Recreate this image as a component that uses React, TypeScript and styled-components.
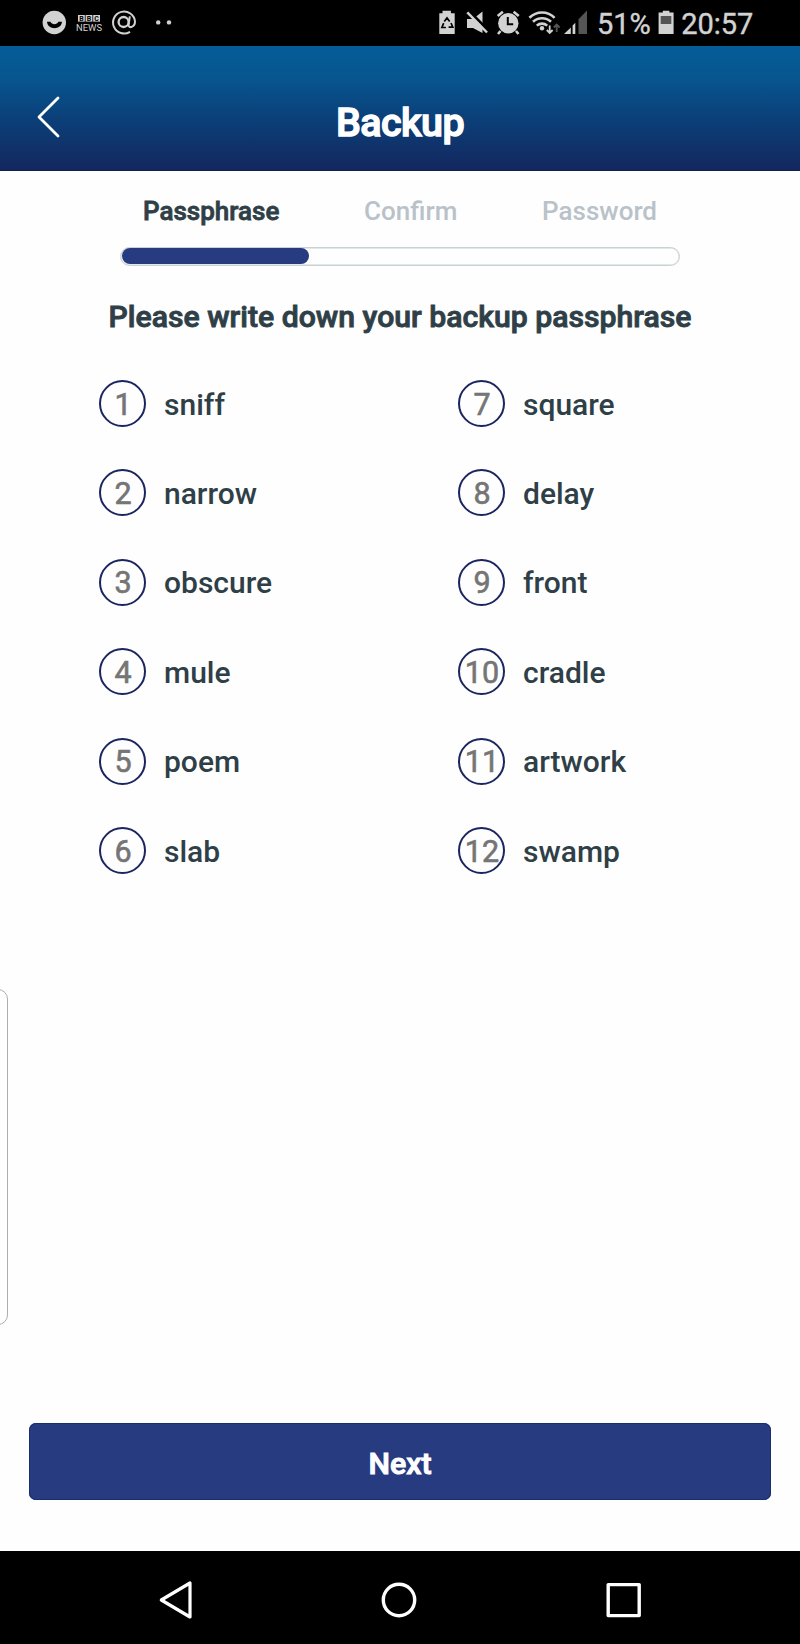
import React from 'react';
import styled, { createGlobalStyle } from 'styled-components';

const GlobalStyle = createGlobalStyle`
  * { box-sizing: border-box; }
  body { margin: 0; background: #fff; font-family: Roboto, "Liberation Sans", sans-serif; }
`;

const Screen = styled.div`
  width: 800px;
  height: 1644px;
  display: flex;
  flex-direction: column;
  position: relative;
  overflow: hidden;
  background: #fefefe;
`;

const StatusBar = styled.div`
  height: 46px;
  flex: none;
  background: #000;
  color: #d2d2d2;
  display: flex;
  justify-content: space-between;
  padding: 0 42px 0 40px;
`;

const StatusGroup = styled.div`
  display: flex;
  align-items: flex-start;
`;

const StatusText = styled.span<{ $width: number }>`
  width: ${(p) => p.$width}px;
  font-size: 29px;
  line-height: 48px;
  white-space: nowrap;
  -webkit-text-stroke: 0.4px currentColor;
`;

const Header = styled.header`
  height: 125px;
  flex: none;
  display: grid;
  grid-template-columns: 100px 1fr 100px;
  align-items: center;
  padding-top: 30px;
  background: linear-gradient(#045d97 0%, #075690 25%, #0b4079 58%, #14275f 100%);
  border-bottom: 1px solid #10204c;
`;

const BackButton = styled.button`
  width: 30px;
  height: 46px;
  margin: -13px 0 0 34px;
  padding: 0;
  border: 0;
  background: none;
`;

const Title = styled.h1`
  margin: 0;
  text-align: center;
  color: #fff;
  font-size: 39.5px;
  line-height: 48px;
  font-weight: 500;
  letter-spacing: -0.6px;
  -webkit-text-stroke: 1.3px currentColor;
`;

const Main = styled.main`
  flex: 1;
  display: flex;
  flex-direction: column;
  padding: 25px 29px 51px;
`;

const Steps = styled.div`
  width: 560px;
  margin: 0 auto;
`;

const StepLabels = styled.div`
  display: flex;
  justify-content: space-between;
  padding: 0 23px;
`;

const StepLabel = styled.span<{ $active?: boolean }>`
  font-size: 26px;
  line-height: 30px;
  font-weight: 500;
  color: ${(p) => (p.$active ? '#2f3f47' : '#b9c2c9')};
  -webkit-text-stroke: ${(p) => (p.$active ? 0.8 : 0)}px currentColor;
`;

const Track = styled.div`
  margin-top: 21px;
  height: 19px;
  border: 1.5px solid #cbd2d5;
  border-radius: 10px;
  padding: 0 1px;
  box-shadow: inset 0 0 0 0.5px #cbd2d5;
`;

const Fill = styled.div`
  width: 187px;
  height: 16px;
  border-radius: 8px;
  background: #273b80;
`;

const Heading = styled.h2`
  margin: 33px 0 0;
  text-align: center;
  font-size: 30.2px;
  line-height: 36px;
  font-weight: 500;
  color: #2f3f47;
  -webkit-text-stroke: 0.9px currentColor;
  white-space: nowrap;
`;

const WordGrid = styled.ol`
  list-style: none;
  margin: 45px 0 0;
  padding: 0 0 0 70px;
  display: grid;
  grid-template-columns: 359px 1fr;
  grid-template-rows: repeat(6, 47px);
  grid-auto-flow: column;
  row-gap: 42.45px;
`;

const WordItem = styled.li`
  display: flex;
  align-items: center;
  gap: 18px;
`;

const Badge = styled.span`
  width: 47px;
  height: 47px;
  border: 2px solid #1b2560;
  border-radius: 50%;
  display: flex;
  align-items: center;
  justify-content: center;
  padding: 2px 0 0 1px;
  font-size: 30.5px;
  line-height: 36px;
  font-weight: 400;
  -webkit-text-stroke: 0.6px currentColor;
  color: #757575;
`;

const Word = styled.span`
  padding-top: 2px;
  font-size: 30px;
  line-height: 36px;
  font-weight: 500;
  color: #2f3f47;
`;

const NextButton = styled.button`
  margin-top: auto;
  height: 77px;
  border: 0;
  border-radius: 7px;
  background: #273b80;
  box-shadow: inset 0 0 0 1px #1c2d6c;
  color: #fff;
  font-family: inherit;
  font-size: 30.3px;
  font-weight: 500;
  -webkit-text-stroke: 1px currentColor;
  padding: 3px 0 0;
`;

const EdgeHandle = styled.div`
  position: absolute;
  left: -20px;
  top: 989px;
  width: 28px;
  height: 336px;
  border: 1.5px solid #adadad;
  border-radius: 10px;
`;

const NavBar = styled.nav`
  height: 93px;
  flex: none;
  background: #000;
  display: flex;
  justify-content: space-between;
  align-items: center;
  padding: 5px 157px 0;
`;

const LeftStatusIcons = () => (
  <svg width="150" height="46" viewBox="40 0 150 46" fill="none">
    <circle cx="54.3" cy="22.5" r="11.7" fill="#d2d2d2" />
    <path d="M47 21.8h3.4c1.3 3.2 6.8 3.2 8 0h3.6c-.6 8.6-14.4 8.6-15 0Z" fill="#000" />
    <g fill="#d2d2d2">
      <rect x="78" y="15" width="6.8" height="6.6" />
      <rect x="85.6" y="15" width="6.8" height="6.6" />
      <rect x="93.2" y="15" width="6.8" height="6.6" />
    </g>
    <g fontFamily="Roboto, sans-serif">
      <g fill="#000" fontSize="7" fontWeight="700" textAnchor="middle">
        <text x="81.4" y="20.9">B</text>
        <text x="89" y="20.9">B</text>
        <text x="96.6" y="20.9">C</text>
      </g>
      <text x="76" y="31" fill="#d2d2d2" fontSize="9.7" textLength="26" lengthAdjust="spacingAndGlyphs">NEWS</text>
    </g>
    <circle cx="123.6" cy="22" r="5" stroke="#d2d2d2" strokeWidth="2.3" />
    <path d="M129.8 16.3l-1.2 8.6c-.2 4 6.4 2.4 6.4-3.4A11 11 0 1 0 130 31.8" stroke="#d2d2d2" strokeWidth="2" />
    <circle cx="158.2" cy="22.4" r="2.2" fill="#d2d2d2" />
    <circle cx="169" cy="22.4" r="2.2" fill="#d2d2d2" />
  </svg>
);

const RightStatusIcons = () => (
  <svg width="162" height="46" viewBox="435 0 162 46" fill="none">
    {/* battery saver */}
    <path d="M439.3 13.2h3.2v-2.4h8.4v2.4h3.8V34h-15.4Z" fill="#d2d2d2" />
    <path d="M444.3 21.5l2.7-3.6 2.7 3.6M451 23l1.8 4.2h-4.2M445.9 27.5h-4l1.8-4.4" stroke="#000" strokeWidth="1.7" />
    {/* muted */}
    <path d="M467 19h6l9.5-7.5v21.5L473 28h-6Z" fill="#d2d2d2" />
    <path d="M469.2 11.4l20.4 20.4" stroke="#000" strokeWidth="3" />
    <path d="M467.3 12.3L487 32.5" stroke="#d2d2d2" strokeWidth="2.5" />
    {/* alarm */}
    <circle cx="508.3" cy="23.2" r="10.2" fill="#d2d2d2" />
    <path d="M497.7 16l5.2-4.3M518.8 16l-5.2-4.3M500.5 31l-2.5 3M516 31l2.5 3" stroke="#d2d2d2" strokeWidth="2.6" />
    <path d="M507.8 17v7.2h5.4" stroke="#000" strokeWidth="2" />
    {/* wifi */}
    <g stroke="#d2d2d2" strokeWidth="2.6">
      <path d="M529.4 17.8c7.2-7 18.2-7 25.2 0" />
      <path d="M533 21.8c5-4.8 13-4.8 18 0" />
      <path d="M536.8 25.6c3-2.7 7.4-2.7 10.4 0" />
    </g>
    <circle cx="542" cy="28.2" r="2.2" fill="#d2d2d2" />
    <path d="M549.7 25.5v7M546.8 30l2.9 3 2.9-3" stroke="#d2d2d2" strokeWidth="1.8" />
    <path d="M556.7 32v-7M553.8 27.5l2.9-3 2.9 3" stroke="#555" strokeWidth="1.8" />
    {/* signal */}
    <path d="M564 34l6.8-6.6V34ZM572.6 25.4l2.7-2.7V34h-2.7Z" fill="#d2d2d2" />
    <path d="M578.5 19.2l8.5-8.6V34h-8.5Z" fill="#555" />
  </svg>
);

const BatteryIcon = () => (
  <svg width="16" height="46" viewBox="658 0 16 46">
    <path d="M658.6 12.6h4.2v-1.8h6.6v1.8h4.2V34h-15Z" fill="#d2d2d2" />
    <rect x="660.7" y="16" width="10.6" height="8" fill="#555" />
  </svg>
);

const steps = ['Passphrase', 'Confirm', 'Password'];
const words = [
  'sniff', 'narrow', 'obscure', 'mule', 'poem', 'slab',
  'square', 'delay', 'front', 'cradle', 'artwork', 'swamp',
];

export default function App() {
  return (
    <Screen>
      <GlobalStyle />
      <StatusBar>
        <LeftStatusIcons />
        <StatusGroup>
          <RightStatusIcons />
          <StatusText $width={61}>51%</StatusText>
          <BatteryIcon />
          <StatusText $width={84}>&nbsp;20:57</StatusText>
        </StatusGroup>
      </StatusBar>
      <Header>
        <BackButton aria-label="Back">
          <svg width="30" height="46" viewBox="0 0 30 46" fill="none" stroke="#fff" strokeWidth="2.8" strokeLinecap="round" strokeLinejoin="round">
            <path d="M24 4L5 23l19 19" />
          </svg>
        </BackButton>
        <Title>Backup</Title>
      </Header>
      <Main>
        <Steps>
          <StepLabels>
            {steps.map((label, i) => (
              <StepLabel key={label} $active={i === 0}>{label}</StepLabel>
            ))}
          </StepLabels>
          <Track><Fill /></Track>
        </Steps>
        <Heading>Please write down your backup passphrase</Heading>
        <WordGrid>
          {words.map((word, i) => (
            <WordItem key={word}>
              <Badge>{i + 1}</Badge>
              <Word>{word}</Word>
            </WordItem>
          ))}
        </WordGrid>
        <NextButton>Next</NextButton>
      </Main>
      <EdgeHandle />
      <NavBar>
        <svg width="38" height="40" viewBox="0 0 38 40" fill="none" stroke="#fff" strokeWidth="3.2" strokeLinejoin="round">
          <path d="M4.3 20L33 3v34Z" />
        </svg>
        <svg width="38" height="40" viewBox="0 0 38 40" fill="none" stroke="#fff" strokeWidth="3.4">
          <circle cx="18" cy="20" r="15.7" />
        </svg>
        <svg width="38" height="40" viewBox="0 0 38 40" fill="none" stroke="#fff" strokeWidth="3.4" strokeLinejoin="round">
          <rect x="3.2" y="4.6" width="31" height="31" />
        </svg>
      </NavBar>
    </Screen>
  );
}
